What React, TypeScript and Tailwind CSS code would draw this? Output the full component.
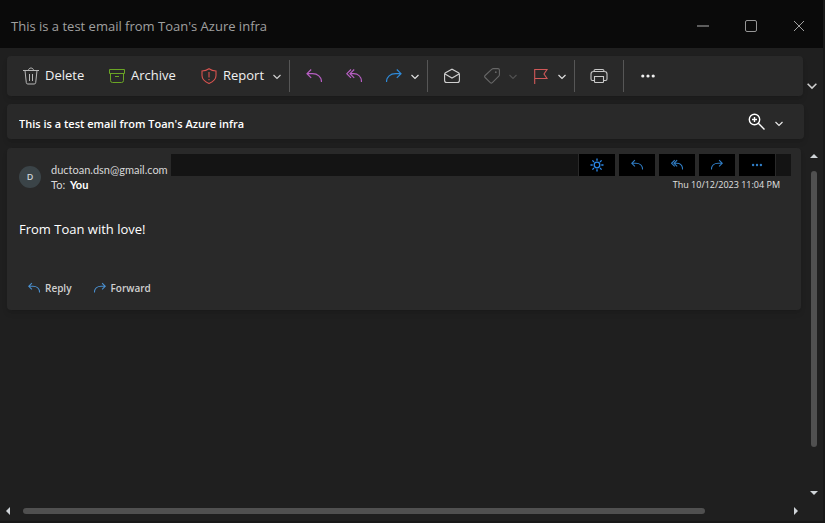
import type { ReactNode } from "react";

type IconProps = { className?: string; size?: number };

function ReplyIcon({ className = "", size = 16 }: IconProps) {
  return (
    <svg width={size} height={size} viewBox="0 0 16 16" fill="none" stroke="currentColor" strokeWidth={size < 16 ? 1.5 : 1.2} className={className} aria-hidden="true">
      <path d="M5.200 1.500 1 5.700l4.200 4.200M1 5.700h5.500c5 0 9 3 9 8.300" />
    </svg>
  );
}

function ReplyAllIcon({ className = "", size = 16 }: IconProps) {
  return (
    <svg width={size} height={size} viewBox="0 0 16 16" fill="none" stroke="currentColor" strokeWidth={size < 16 ? 1.5 : 1.2} className={className} aria-hidden="true">
      <path d="M5 1.500.8 5.700 5 9.900M8.200 1.500 4 5.700l4.200 4.200M4 5.700h3.500c4.600 0 8 3 8 8.300" />
    </svg>
  );
}

function ForwardIcon({ className = "", size = 16 }: IconProps) {
  return (
    <svg width={size} height={size} viewBox="0 0 16 16" fill="none" stroke="currentColor" strokeWidth={size < 16 ? 1.5 : 1.2} className={className} aria-hidden="true">
      <path d="m10.800 1.500 4.200 4.200-4.200 4.200M15 5.700H9.500c-5 0-9 3-9 8.300" />
    </svg>
  );
}

function ChevronIcon({ className = "", size = 8 }: IconProps) {
  return (
    <svg width={size} height={size} viewBox="0 0 8 8" fill="none" stroke="currentColor" strokeWidth="1.2" className={className} aria-hidden="true">
      <path d="M.5 3 4 6.500 7.500 3" />
    </svg>
  );
}

function TrashIcon() {
  return (
    <svg width="16" height="18" viewBox="0 0 16 18" fill="none" stroke="#b8b8b8" className="shrink-0" aria-hidden="true">
      <path d="M0 3.500h16M2 3.500l1.300 12.200q.2 1.300 1.500 1.300h6.400q1.300 0 1.500-1.300L14 3.500M5.500 3.500C5.500.2 10.500.2 10.500 3.500M6.500 7v7M9.500 7v7" />
    </svg>
  );
}

function ArchiveIcon() {
  return (
    <svg width="16" height="16" viewBox="0 0 16 16" fill="none" stroke="#6aa524" className="shrink-0" aria-hidden="true">
      <path d="M.5 1.500h15v4H.5zM1.500 5.500v7q0 2 2 2h9q2 0 2-2v-7M6 8.500h4" />
    </svg>
  );
}

function ShieldIcon() {
  return (
    <svg width="16" height="16" viewBox="0 0 16 16" fill="none" stroke="#d9534f" strokeWidth="1.100" className="shrink-0" aria-hidden="true">
      <path d="M8 .7Q11 2.800 15 3v4.500c0 3.700-3 6.300-7 7.900C4 13.800 1 11.200 1 7.500V3Q5 2.800 8 .7ZM8 4v5.500M8 11v1.300" />
    </svg>
  );
}

function MailOpenIcon() {
  return (
    <svg width="16" height="16" viewBox="0 0 16 16" fill="none" stroke="#d0d0d0" strokeWidth="1.100" aria-hidden="true">
      <path d="M.6 6.200q0-1 .9-1.500L8 1.200l6.500 3.500q.9.500.9 1.500v6.300q0 2-2 2H2.600q-2 0-2-2ZM1 6l7 4 7-4" />
    </svg>
  );
}

function TagIcon() {
  return (
    <svg width="16" height="16" viewBox="0 0 16 16" fill="none" stroke="#666666" strokeWidth="1.100" aria-hidden="true">
      <path d="M9.300.6h4.700q1.400 0 1.400 1.400v4.800q0 .8-.6 1.400l-6.500 6.500q-1 1-2 0L1.100 9.500q-1-1 0-2L7.900 1.200Q8.500.6 9.300.6Z" />
      <circle cx="11.800" cy="4.200" r=".9" fill="#666666" stroke="none" />
    </svg>
  );
}

function FlagIcon() {
  return (
    <svg width="16" height="16" viewBox="0 0 16 16" fill="none" stroke="#d05858" strokeWidth="1.100" aria-hidden="true">
      <path d="M1.700 16V1.500h12.300l-3 4.500 3 4.500H1.700" />
    </svg>
  );
}

function PrinterIcon() {
  return (
    <svg width="18" height="16" viewBox="0 0 18 16" fill="none" stroke="#c8c8c8" strokeWidth="1.100" aria-hidden="true">
      <path d="M4 3.500V3q0-1.500 1.500-1.500h7Q14 1.500 14 3v.500M4.500 12.500h-2q-1.500 0-1.500-1.500V6q0-2.500 2.500-2.500h11Q17 3.500 17 6v5q0 1.500-1.500 1.500h-2M4.500 8.500h9v5.300q0 .7-.7.700H5.200q-.7 0-.7-.7Z" />
    </svg>
  );
}

function DotsIcon({ size = 16 }: IconProps) {
  return (
    <svg width={size} height={size} viewBox="0 0 16 16" fill="currentColor" aria-hidden="true">
      <circle cx="2.800" cy="8" r="1.600" />
      <circle cx="8" cy="8" r="1.600" />
      <circle cx="13.200" cy="8" r="1.600" />
    </svg>
  );
}

function SunIcon() {
  return (
    <svg width="14" height="14" viewBox="0 0 14 14" fill="none" stroke="#2b88e8" strokeWidth="1.300" aria-hidden="true">
      <circle cx="7" cy="7" r="2.800" />
      <path d="M7 .5v2.200M7 11.300v2.200M.5 7h2.200M11.300 7h2.200M2.400 2.400 4 4M10 10l1.600 1.600M2.400 11.600 4 10M10 4l1.600-1.600" />
    </svg>
  );
}

function ZoomIcon() {
  return (
    <svg width="18" height="18" viewBox="0 0 18 18" fill="none" stroke="#ffffff" strokeWidth="1.400" aria-hidden="true">
      <circle cx="7.500" cy="6.500" r="5.200" />
      <path d="m11.300 10.300 6.200 6.200M7.500 4v5M5 6.500h5" />
    </svg>
  );
}

function Arrow({ d, label }: { d: string; label: string }) {
  return (
    <button type="button" aria-label={label} className="flex size-4 shrink-0 items-center justify-center">
      <svg width="8" height="8" viewBox="0 0 8 8" fill="#cfd4d8" aria-hidden="true">
        <path d={d} />
      </svg>
    </button>
  );
}

function Tool({ label, wide, disabled, children }: { label: string; wide?: boolean; disabled?: boolean; children: ReactNode }) {
  return (
    <button
      type="button"
      aria-label={label}
      disabled={disabled}
      className={`flex h-10 shrink-0 items-center ${wide ? "w-[49px] gap-[9px] pl-3" : "w-10 justify-center"}`}
    >
      {children}
    </button>
  );
}

function Divider() {
  return <div className="mx-1 h-8 w-px shrink-0 bg-[#565656]" />;
}

function QuickAction({ label, children }: { label: string; children: ReactNode }) {
  return (
    <button type="button" aria-label={label} className="flex h-[22px] w-9 items-center justify-center bg-black text-[#2f7cc4]">
      {children}
    </button>
  );
}

function TitleBar() {
  return (
    <header className="flex h-12 shrink-0 items-center bg-[#0a0a0a] pt-1 text-[#a0a0a0]">
      <h1 className="flex-1 truncate pl-[11px] text-[13px] leading-5">This is a test email from Toan's Azure infra</h1>
      <button type="button" aria-label="Minimize" className="flex h-10 w-12 items-center justify-center">
        <span className="h-0.5 w-3 bg-[#5c5c5c]" />
      </button>
      <button type="button" aria-label="Maximize" className="flex h-10 w-12 items-center justify-center">
        <span className="size-3 rounded-xs border border-[#969696]" />
      </button>
      <button type="button" aria-label="Close" className="flex h-10 w-12 items-center justify-center">
        <svg width="10" height="10" viewBox="0 0 10 10" fill="none" stroke="currentColor" aria-hidden="true">
          <path d="m0 0 10 10M10 0 0 10" />
        </svg>
      </button>
    </header>
  );
}

function Toolbar() {
  return (
    <div className="mt-2 flex shrink-0 pl-[7px]">
      <div role="toolbar" className="flex h-10 min-w-0 flex-1 items-center rounded bg-[#292929] pl-2 text-[13px] font-medium text-[#f0f0f0] shadow-md">
        <button type="button" className="flex h-10 w-[86px] shrink-0 items-center gap-1.5 pl-2">
          <TrashIcon />
          Delete
        </button>
        <button type="button" className="flex h-10 w-[92px] shrink-0 items-center gap-1.5 pl-2">
          <ArchiveIcon />
          Archive
        </button>
        <button type="button" className="flex h-10 w-[92px] shrink-0 items-center gap-1.5 pl-2">
          <ShieldIcon />
          Report
          <ChevronIcon className="ml-auto mr-1 text-[#d0d0d0]" />
        </button>
        <Divider />
        <Tool label="Reply"><ReplyIcon className="text-[#b85fc4]" /></Tool>
        <Tool label="Reply all"><ReplyAllIcon className="text-[#b85fc4]" /></Tool>
        <Tool label="Forward" wide>
          <ForwardIcon className="text-[#2f8ad8]" />
          <ChevronIcon className="text-[#e0e0e0]" />
        </Tool>
        <Divider />
        <Tool label="Mark as read"><MailOpenIcon /></Tool>
        <Tool label="Categorize" wide disabled>
          <TagIcon />
          <ChevronIcon className="text-[#505050]" />
        </Tool>
        <Tool label="Flag" wide>
          <FlagIcon />
          <ChevronIcon className="text-[#e0e0e0]" />
        </Tool>
        <Divider />
        <Tool label="Print"><PrinterIcon /></Tool>
        <Divider />
        <Tool label="More options"><DotsIcon /></Tool>
      </div>
      <button type="button" aria-label="Ribbon options" className="flex w-5 shrink-0 items-end pb-1.5 pl-1 text-[#d0d0d0]">
        <ChevronIcon size={10} />
      </button>
    </div>
  );
}

function SubjectBar() {
  return (
    <div className="mt-2 mr-[19px] ml-[7px] flex h-[35px] shrink-0 items-center rounded bg-[#292929] pr-[21px] pl-3 shadow-md">
      <h2 className="flex-1 truncate pt-1 text-[11px] leading-4 font-semibold text-white">This is a test email from Toan's Azure infra</h2>
      <button type="button" aria-label="Zoom" className="flex items-center gap-2.5 text-[#e8e8e8]">
        <ZoomIcon />
        <ChevronIcon className="mt-0.5" />
      </button>
    </div>
  );
}

function Message() {
  return (
    <article className="rounded bg-[#292929] pt-1.5 pb-2.5 pl-3 shadow-md">
      <div className="flex">
        <div className="mt-3 flex size-[22px] shrink-0 items-center justify-center rounded-full bg-[#3b4448] text-[9px] font-semibold text-[#c8ced2]">D</div>
        <div className="min-w-0 flex-1 pl-2.5 font-[Lato,sans-serif] text-[11px]">
          <div className="flex h-[22px] pr-2.5">
            <span className="min-w-30 shrink-0 pt-2 leading-4 text-[#d8d8d8]">ductoan.dsn@gmail.com</span>
            <div className="flex-1 bg-[#141414]" />
            <div className="mx-px flex gap-1">
              <QuickAction label="Light mode"><SunIcon /></QuickAction>
              <QuickAction label="Reply"><ReplyIcon size={12} /></QuickAction>
              <QuickAction label="Reply all"><ReplyAllIcon size={12} /></QuickAction>
              <QuickAction label="Forward"><ForwardIcon size={12} /></QuickAction>
              <QuickAction label="More actions"><DotsIcon size={12} /></QuickAction>
            </div>
            <div className="w-[15px] bg-[#141414]" />
          </div>
          <div className="flex items-center justify-between pt-px pr-[21px] leading-4">
            <p className="text-[#d8d8d8]">
              To: <span className="pl-0.5 font-bold text-white">You</span>
            </p>
            <time className="font-['Open_Sans',sans-serif] text-[9px] text-[#e0e0e0]">Thu 10/12/2023 11:04 PM</time>
          </div>
        </div>
      </div>
      <p className="mt-[26px] text-[13px] leading-5 text-white">From Toan with love!</p>
      <div className="mt-[37px] flex h-6 items-center gap-[22px] pl-[9px] text-[10px] font-semibold text-[#d0d0d0]">
        <button type="button" className="flex items-center gap-[5px]">
          <ReplyIcon size={12} className="text-[#4a90d0]" />
          Reply
        </button>
        <button type="button" className="flex items-center gap-[5px]">
          <ForwardIcon size={12} className="text-[#4a90d0]" />
          Forward
        </button>
      </div>
    </article>
  );
}

export default function App() {
  return (
    <div className="flex h-screen flex-col overflow-hidden border-r-2 border-b-2 border-[#181818] bg-[#1f1f1f] font-['Open_Sans',sans-serif]">
      <TitleBar />
      <Toolbar />
      <SubjectBar />
      <div className="flex min-h-0 flex-1">
        <main className="min-w-0 flex-1 pt-[9px] pr-[5px] pl-[7px]">
          <Message />
        </main>
        <div className="mr-px flex w-4 shrink-0 flex-col items-center pt-[9px]">
          <Arrow label="Scroll up" d="M0 6 4 2l4 4z" />
          <div className="my-[7px] flex w-1.5 flex-1 flex-col">
            <div className="h-[90%] rounded-full bg-[#505050]" />
          </div>
          <Arrow label="Scroll down" d="M0 2h8L4 6z" />
        </div>
      </div>
      <div className="flex h-5 shrink-0 items-center pr-[19px]">
        <Arrow label="Scroll left" d="M6 0v8L2 4z" />
        <div className="mx-[7px] flex h-1.5 flex-1">
          <div className="w-[90%] rounded-full bg-[#505050]" />
        </div>
        <Arrow label="Scroll right" d="M2 0v8l4-4z" />
      </div>
    </div>
  );
}
